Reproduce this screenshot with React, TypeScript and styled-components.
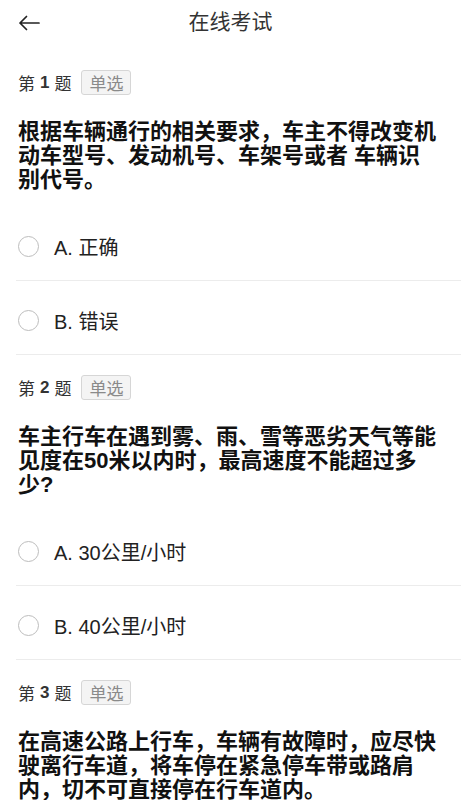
import styled, { createGlobalStyle } from 'styled-components';

const GlobalStyle = createGlobalStyle`
  * {
    box-sizing: border-box;
  }
  body {
    margin: 0;
    background: #fff;
    font-family: 'Liberation Sans', 'Noto Sans CJK SC', sans-serif;
    color: #222;
  }
`;

const Page = styled.div`
  width: 100%;
  min-height: 100vh;
  background: #fff;
`;

const Header = styled.header`
  position: relative;
  height: 44px;
  display: flex;
  align-items: center;
  justify-content: center;
`;

const BackButton = styled.button`
  position: absolute;
  left: 14px;
  top: 8px;
  width: 30px;
  height: 30px;
  padding: 0;
  border: none;
  background: none;
  display: flex;
  align-items: center;
  justify-content: center;
  color: #222;
`;

const Title = styled.h1`
  margin: 0;
  font-size: 21px;
  font-weight: 400;
  color: #333;
  line-height: 44px;
`;

const List = styled.main`
  padding-top: 6px;
`;

const Question = styled.section`
  padding-top: 20px;
`;

const LabelRow = styled.div`
  display: flex;
  align-items: center;
  padding: 0 18px;
  height: 25px;
  font-size: 17px;
  color: #333;
`;

const Num = styled.b`
  font-weight: 700;
  margin: 0 5px;
`;

const Tag = styled.span`
  margin-left: 10px;
  height: 25px;
  padding: 0 7px;
  display: inline-flex;
  align-items: center;
  border: 1px solid #d6d6d6;
  border-radius: 3px;
  background: #f4f4f4;
  color: #8a8a8a;
  font-size: 17px;
`;

const Stem = styled.p`
  margin: 25px 0 15px;
  padding: 0 22px 0 18px;
  font-size: 22px;
  line-height: 24px;
  font-weight: 700;
  color: #111;
`;

const Option = styled.label`
  display: flex;
  align-items: center;
  height: 74px;
  padding-top: 6px;
  margin-left: 16px;
  border-bottom: 1px solid #ececec;
  font-size: 20px;
  color: #222;
`;

const Radio = styled.span`
  width: 21px;
  height: 21px;
  margin-left: 2px;
  margin-right: 15px;
  border-radius: 50%;
  border: 1px solid #bdbdbd;
  flex-shrink: 0;
`;

const questions = [
  {
    text: '根据车辆通行的相关要求，车主不得改变机动车型号、发动机号、车架号或者 车辆识别代号。',
    options: ['A. 正确', 'B. 错误'],
  },
  {
    text: '车主行车在遇到雾、雨、雪等恶劣天气等能见度在50米以内时，最高速度不能超过多少?',
    options: ['A. 30公里/小时', 'B. 40公里/小时'],
  },
  {
    text: '在高速公路上行车，车辆有故障时，应尽快驶离行车道，将车停在紧急停车带或路肩内，切不可直接停在行车道内。',
    options: ['A. 正确', 'B. 错误'],
  },
];

export default function App() {
  return (
    <Page>
      <GlobalStyle />
      <Header>
        <BackButton aria-label='返回'>
          <svg width='22' height='16' viewBox='0 0 22 16' fill='none'>
            <path
              d='M21 8H2M8.5 1.5L2 8l6.5 6.5'
              stroke='currentColor'
              strokeWidth='1.7'
              strokeLinecap='round'
              strokeLinejoin='round'
            />
          </svg>
        </BackButton>
        <Title>在线考试</Title>
      </Header>
      <List>
        {questions.map((q, i) => (
          <Question key={i}>
            <LabelRow>
              第<Num>{i + 1}</Num>题<Tag>单选</Tag>
            </LabelRow>
            <Stem>{q.text}</Stem>
            {q.options.map((o) => (
              <Option key={o}>
                <Radio />
                {o}
              </Option>
            ))}
          </Question>
        ))}
      </List>
    </Page>
  );
}
